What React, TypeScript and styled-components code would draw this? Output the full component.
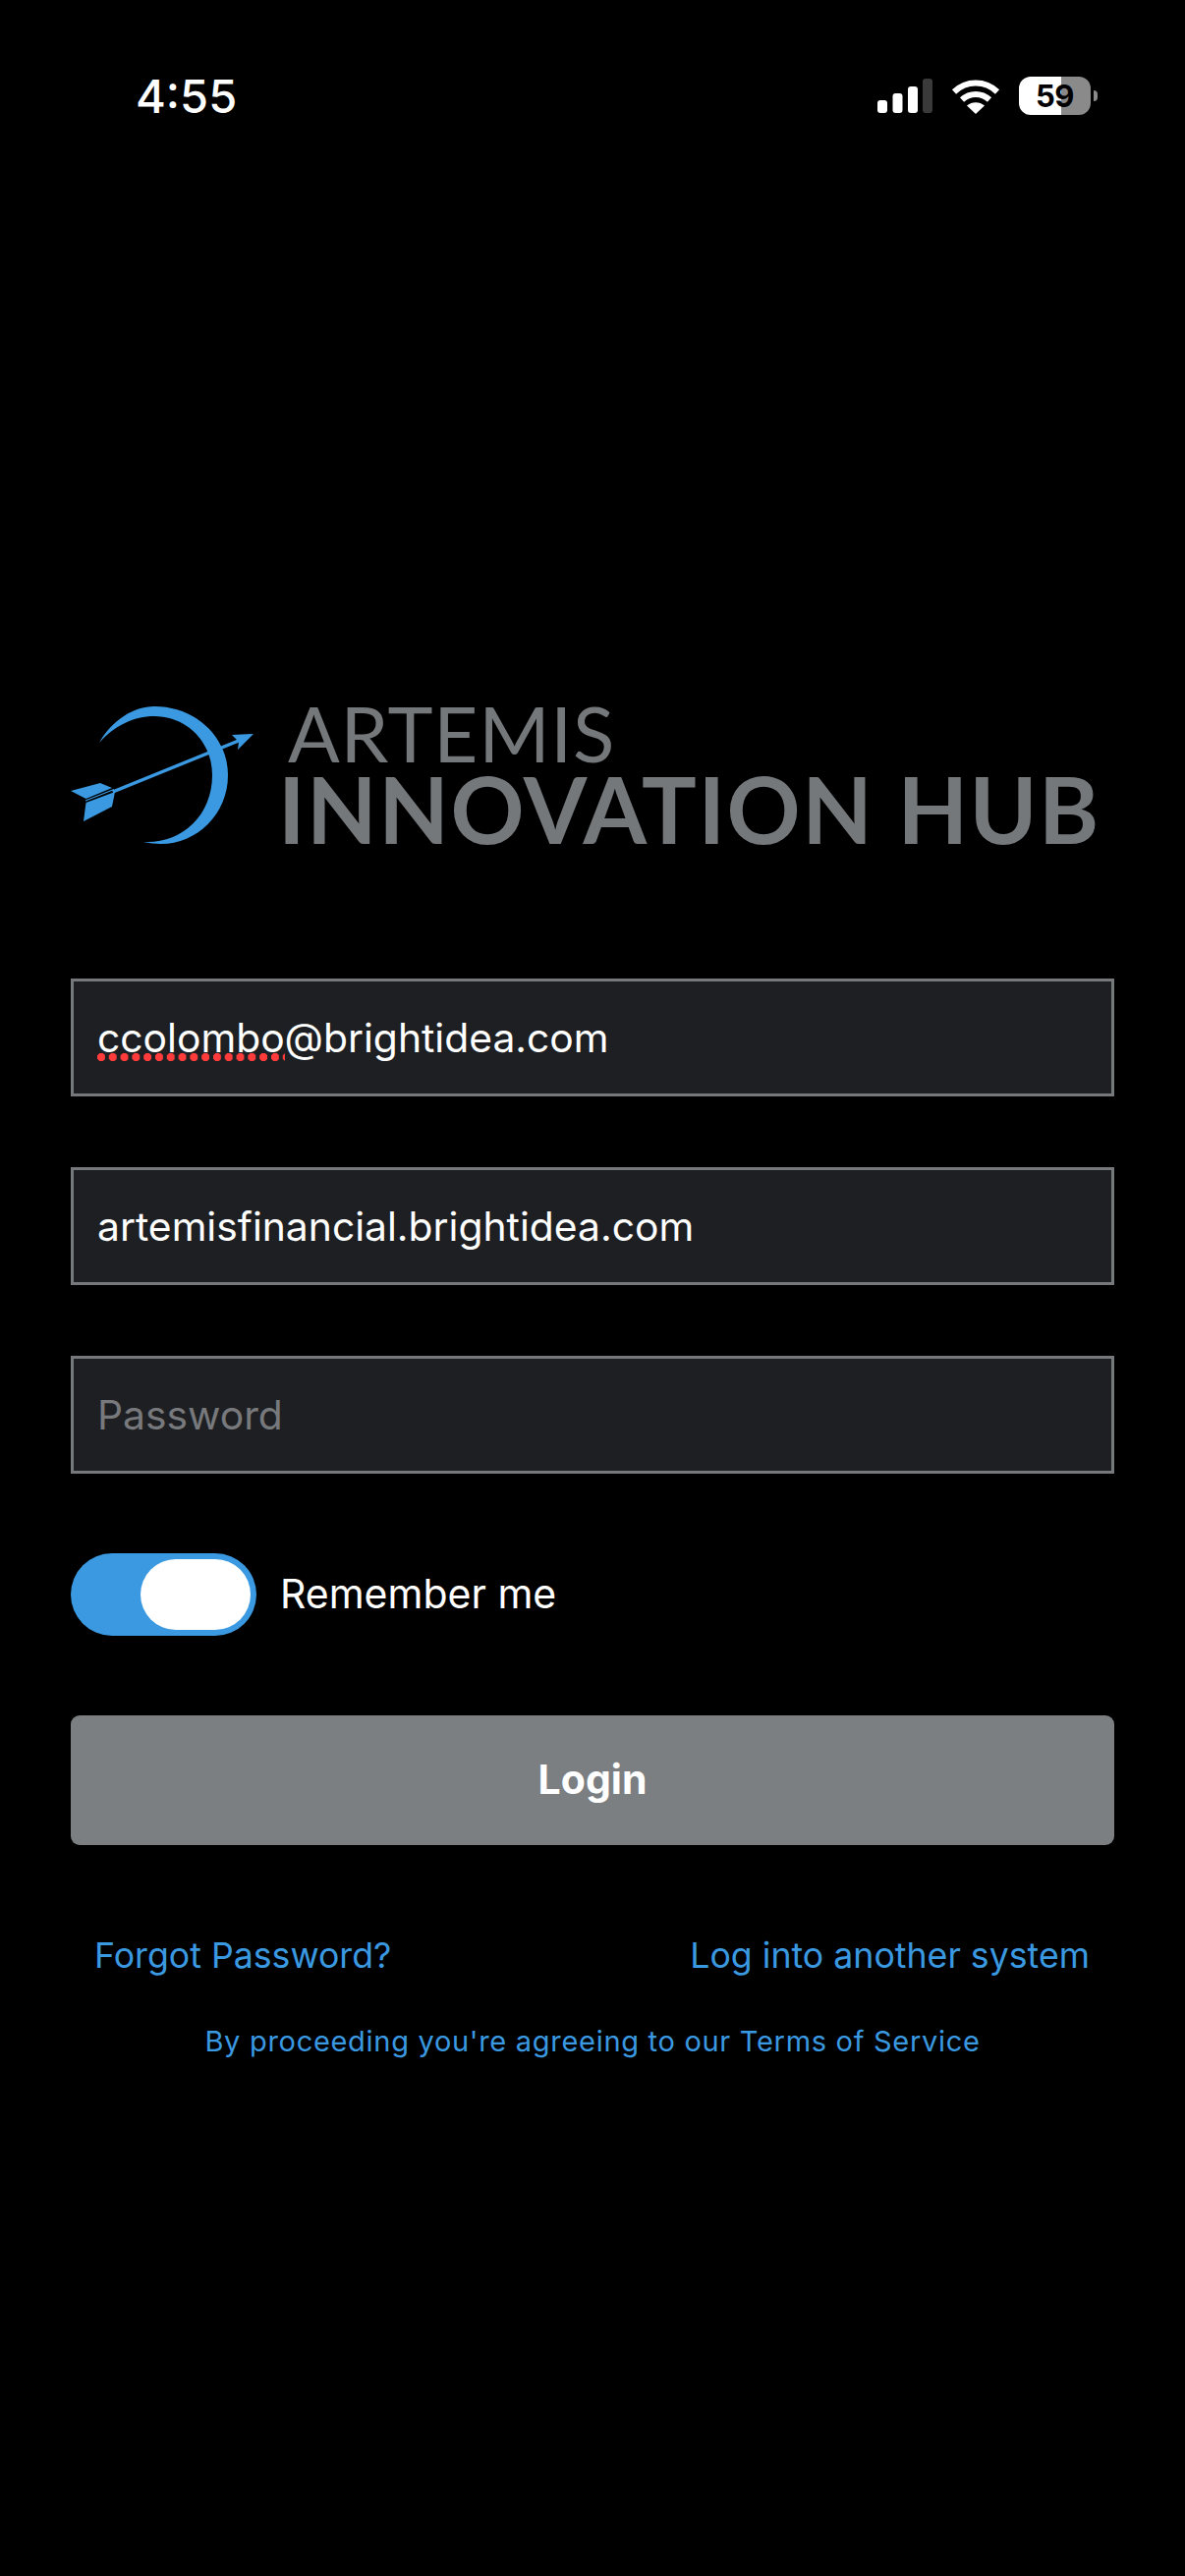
import React from "react";
import styled, { createGlobalStyle } from "styled-components";

const Global = createGlobalStyle`
  html, body { margin: 0; padding: 0; background: #000; }
  body { font-family: "Inter", "Roboto", "Liberation Sans", sans-serif; }
`;

const Page = styled.div`
  width: 1206px;
  height: 2622px;
  background: #000;
  display: flex;
  flex-direction: column;
  overflow: hidden;
`;

const StatusBar = styled.header`
  height: 198px;
  box-sizing: border-box;
  padding: 76px 89px 0 138px;
  display: flex;
  justify-content: space-between;
  align-items: flex-start;
`;

const Time = styled.span`
  font-family: "Inter", sans-serif;
  font-size: 47px;
  line-height: 44px;
  font-weight: 500;
  color: #fff;
`;

const StatusIcons = styled.div`
  display: flex;
  align-items: center;
  gap: 19px;
  margin-top: 2px;
`;

const BatteryWrap = styled.div`
  display: flex;
  align-items: center;
  gap: 3px;
`;

const Battery = styled.div`
  width: 73px;
  height: 39px;
  border-radius: 12px;
  background: linear-gradient(90deg, #fff 0 59%, #8a8a8a 59% 100%);
  color: #000;
  font-family: "Inter", sans-serif;
  font-weight: 700;
  font-size: 31px;
  line-height: 39px;
  letter-spacing: -0.5px;
  text-align: center;
`;

const BatteryNub = styled.div`
  width: 4px;
  height: 11px;
  background: #8a8a8a;
  border-radius: 0 5px 5px 0;
`;

const Main = styled.main`
  padding: 0 72px;
  display: flex;
  flex-direction: column;
`;

const Logo = styled.div`
  display: flex;
  align-items: center;
  margin-top: 513px;
`;

const LogoText = styled.div`
  display: flex;
  flex-direction: column;
  margin-left: 21px;
  color: #75787b;
  font-family: "Lato", sans-serif;
`;

const LogoTop = styled.span`
  font-size: 78px;
  line-height: 66px;
  font-weight: 400;
  letter-spacing: 0.8px;
  margin: 2px 0 0 10px;
`;

const LogoBottom = styled.span`
  font-size: 93px;
  line-height: 88px;
  font-weight: 700;
  letter-spacing: 1.5px;
  white-space: nowrap;
`;

const Fields = styled.div`
  display: flex;
  flex-direction: column;
  gap: 72px;
  margin-top: 129px;
`;

const Field = styled.div<{ $placeholder?: boolean }>`
  height: 120px;
  box-sizing: border-box;
  border: 3px solid #76797c;
  background: #1e1f22;
  padding: 0 24px;
  display: flex;
  align-items: center;
  font-family: "Inter", sans-serif;
  font-size: 40.8px;
  color: ${(p) => (p.$placeholder ? "#77797c" : "#fff")};
`;

const Misspelled = styled.span`
  background-image: radial-gradient(circle at 4px 4px, #ff3b3b 4px, transparent 4.4px);
  background-size: 11.8px 8px;
  background-repeat: repeat-x;
  background-position: 0 calc(100% - 1px);
`;

const RememberRow = styled.div`
  display: flex;
  align-items: center;
  gap: 24px;
  margin-top: 81px;
`;

const Toggle = styled.div`
  width: 189px;
  height: 84px;
  box-sizing: border-box;
  border-radius: 42px;
  background: #3a99e0;
  display: flex;
  justify-content: flex-end;
  align-items: center;
  padding-right: 6px;
`;

const Knob = styled.div`
  width: 112px;
  height: 72px;
  border-radius: 36px;
  background: #fff;
`;

const RememberLabel = styled.span`
  font-family: "Inter", sans-serif;
  font-size: 41px;
  padding-bottom: 2px;
  color: #fff;
`;

const LoginButton = styled.button`
  display: block;
  width: 100%;
  height: 132px;
  margin-top: 81px;
  padding: 0 0 2px;
  border: 0;
  border-radius: 9px;
  background: #7b7f82;
  color: #fff;
  font-family: "Inter", sans-serif;
  font-size: 41px;
  font-weight: 700;
`;

const Links = styled.div`
  display: flex;
  justify-content: space-between;
  padding: 0 25px 0 24px;
  margin-top: 90px;
  font-family: "Inter", sans-serif;
  font-size: 35.7px;
  line-height: 44px;
  color: #3a99e0;
`;

const Terms = styled.p`
  margin: 48px 0 0;
  text-align: center;
  font-family: "Inter", sans-serif;
  font-size: 29px;
  line-height: 36px;
  letter-spacing: 0.7px;
  color: #3a99e0;
`;

const SignalIcon = () => (
  <svg width="56" height="35" viewBox="0 0 56 35" aria-hidden="true">
    <rect x="0" y="22" width="10" height="13" rx="3" fill="#fff" />
    <rect x="15.5" y="15" width="10" height="20" rx="3" fill="#fff" />
    <rect x="31" y="8" width="10" height="27" rx="3" fill="#fff" />
    <rect x="46" y="0" width="10" height="35" rx="3" fill="#3a3a3a" />
  </svg>
);

const WifiIcon = () => (
  <svg width="50" height="36" viewBox="0 0 50 36" aria-hidden="true" fill="none">
    <path d="M3 13.5 C15.5 1.5 34.5 1.5 47 13.5" stroke="#fff" strokeWidth="6" />
    <path d="M11 21.5 C19 14 31 14 39 21.5" stroke="#fff" strokeWidth="6" />
    <path d="M25 36 L16 27.5 C21 23 29 23 34 27.5 Z" fill="#fff" />
  </svg>
);

const BowLogo = () => (
  <svg width="190" height="144" viewBox="0 0 190 144" aria-hidden="true">
    <path
      d="M29 39 C42 16 64 2 85 2 C127 2 160 33 160 72 C160 112 128 142 92 142 C86 142 80 141 74 140 C112 142 144 114 144 72 C144 38 118 12 85 12 C64 12 44 22 29 39 Z"
      fill="#3a99e0"
    />
    <path d="M42 87.5 L170 35.5 L171.5 38.5 L43.5 90.5 Z" fill="#3a99e0" />
    <path d="M186 30 L164 31 L171 38 L170 46 Z" fill="#3a99e0" />
    <path d="M0 88 L30 80 L42 85 L15.5 96 Z" fill="#3a99e0" />
    <path d="M15.5 100 L45 89 L42 104 L13 119 Z" fill="#3a99e0" />
    <path d="M15 98 L44 86.5" stroke="#3a99e0" strokeWidth="1.2" />
  </svg>
);

export default function App() {
  return (
    <Page>
      <Global />
      <StatusBar>
        <Time>4:55</Time>
        <StatusIcons>
          <SignalIcon />
          <WifiIcon />
          <BatteryWrap>
            <Battery>59</Battery>
            <BatteryNub />
          </BatteryWrap>
        </StatusIcons>
      </StatusBar>
      <Main>
        <Logo>
          <BowLogo />
          <LogoText>
            <LogoTop>ARTEMIS</LogoTop>
            <LogoBottom>INNOVATION HUB</LogoBottom>
          </LogoText>
        </Logo>
        <Fields>
          <Field>
            <span>
              <Misspelled>ccolombo</Misspelled>@brightidea.com
            </span>
          </Field>
          <Field>artemisfinancial.brightidea.com</Field>
          <Field $placeholder>Password</Field>
        </Fields>
        <RememberRow>
          <Toggle>
            <Knob />
          </Toggle>
          <RememberLabel>Remember me</RememberLabel>
        </RememberRow>
        <LoginButton>Login</LoginButton>
        <Links>
          <span>Forgot Password?</span>
          <span>Log into another system</span>
        </Links>
        <Terms>By proceeding you're agreeing to our Terms of Service</Terms>
      </Main>
    </Page>
  );
}
